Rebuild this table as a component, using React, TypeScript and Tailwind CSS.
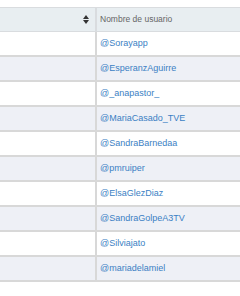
const users = [
  "Sorayapp",
  "EsperanzAguirre",
  "_anapastor_",
  "MariaCasado_TVE",
  "SandraBarnedaa",
  "pmruiper",
  "ElsaGlezDiaz",
  "SandraGolpeA3TV",
  "Silviajato",
  "mariadelamiel",
];

export default function App() {
  return (
    <div className="h-[296px] w-[240px] overflow-hidden bg-white pt-[7px] font-['Liberation_Sans',Arial,sans-serif]">
      <div className="w-[260px]">
        {/* Header */}
        <div className="grid h-[25px] grid-cols-[95px_2px_1fr] border-y border-[#d9dcdf] bg-[#e8eef1]">
          <div className="flex items-center justify-end pr-[6px]">
            <svg width="6" height="9" viewBox="0 0 6 9">
              <path d="M3 0 L6 4 L0 4 Z" fill="#333" />
              <path d="M0 5 L6 5 L3 9 Z" fill="#333" />
            </svg>
          </div>
          <div className="bg-[#d9dcdf]" />
          <div className="flex items-center pl-[3px] text-[8.5px] text-[#666]">Nombre de usuario</div>
        </div>
        {/* Rows */}
        {users.map((u, i) => (
          <div
            key={u}
            className={`grid h-[25px] grid-cols-[95px_2px_1fr] border-b-2 border-[#d8d8d8] ${
              i % 2 === 0 ? "bg-white" : "bg-[#eef0f6]"
            }`}
          >
            <div />
            <div className="bg-[#d8d8d8]" />
            <div className="flex items-center pl-[3px] text-[9px] text-[#3b7fc4]">@{u}</div>
          </div>
        ))}
      </div>
    </div>
  );
}
